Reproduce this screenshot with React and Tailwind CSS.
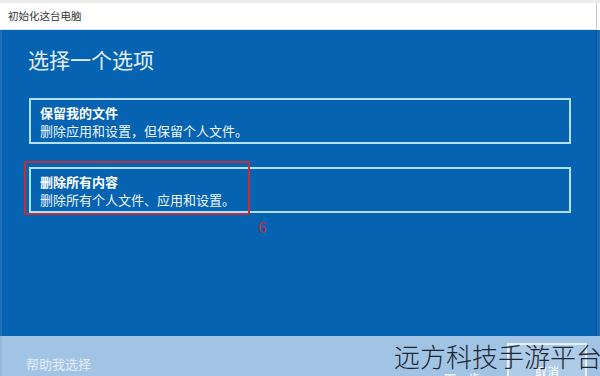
import React from 'react';

function Option({ title, desc }) {
  return (
    <div className="border-2 border-[#b4e0f6] px-[9px] pt-[4px] pb-[2px] text-white">
      <div className="text-[13px] leading-[18px] font-bold">{title}</div>
      <div className="text-[13px] leading-[18px] text-[#eef6fc]">{desc}</div>
    </div>
  );
}

function App() {
  return (
    <div className="relative w-[600px] h-[376px] overflow-hidden flex flex-col font-['Noto_Sans_CJK_SC','Noto_Sans',sans-serif]">
      {/* title bar */}
      <div className="h-[30px] flex bg-[#ececec] pt-[3px]">
        <div className="flex-1 flex items-center pl-[8px] bg-white text-[10.5px] text-[#333] border-b border-[#d8e6f2]">
          初始化这台电脑
        </div>
        <div className="w-[4px] bg-white border-l border-[#c8c8c8]"></div>
      </div>

      {/* main */}
      <div className="h-[306px] flex">
        <div className="flex-1 bg-[#0563b1] pl-[27px] pr-[25px] pt-[15px] border-l-2 border-[#1f6fb8]">
          <h1 className="text-[21px] leading-[28px] text-[#e4effa] -ml-[1px]">选择一个选项</h1>
          <div className="mt-[25px] flex flex-col gap-[23px]">
            <Option title="保留我的文件" desc="删除应用和设置，但保留个人文件。" />
            <Option title="删除所有内容" desc="删除所有个人文件、应用和设置。" />
          </div>
        </div>
        <div className="w-[4px] bg-[#1a6ab4] border-l border-[#0a4f8f]"></div>
      </div>

      {/* bottom */}
      <div className="flex-1 flex bg-[#a2c4e4] border-l-2 border-[#94b8da]">
        <div className="flex-1 relative">
          <div className="absolute left-[24px] top-[18px] text-[13px] text-[#e2ecf6]">帮助我选择</div>
          <div className="absolute left-[442px] top-[34px] text-[12px] font-bold text-[#eaf2fa]">下一步</div>
          <div className="absolute left-[505px] top-[7px] w-[80px] h-[40px] border-2 border-[#e8f1fa] bg-[#aecbe7] flex justify-center pt-[18px] text-[12px] text-white">
            取消
          </div>
        </div>
      </div>

      {/* annotations */}
      <div className="absolute left-[24px] top-[161px] w-[226px] h-[54px] border-2 border-[#b8323f] rounded-[2px]"></div>
      <div className="absolute left-[258px] top-[216px] text-[15px] text-[#c0303c]">6</div>

      {/* watermark */}
      <div className="absolute left-[394px] top-[339px] text-[26px] leading-[34px] font-light text-[#1c2733] whitespace-nowrap">
        远方科技手游平台
      </div>
    </div>
  );
}

export default App;
